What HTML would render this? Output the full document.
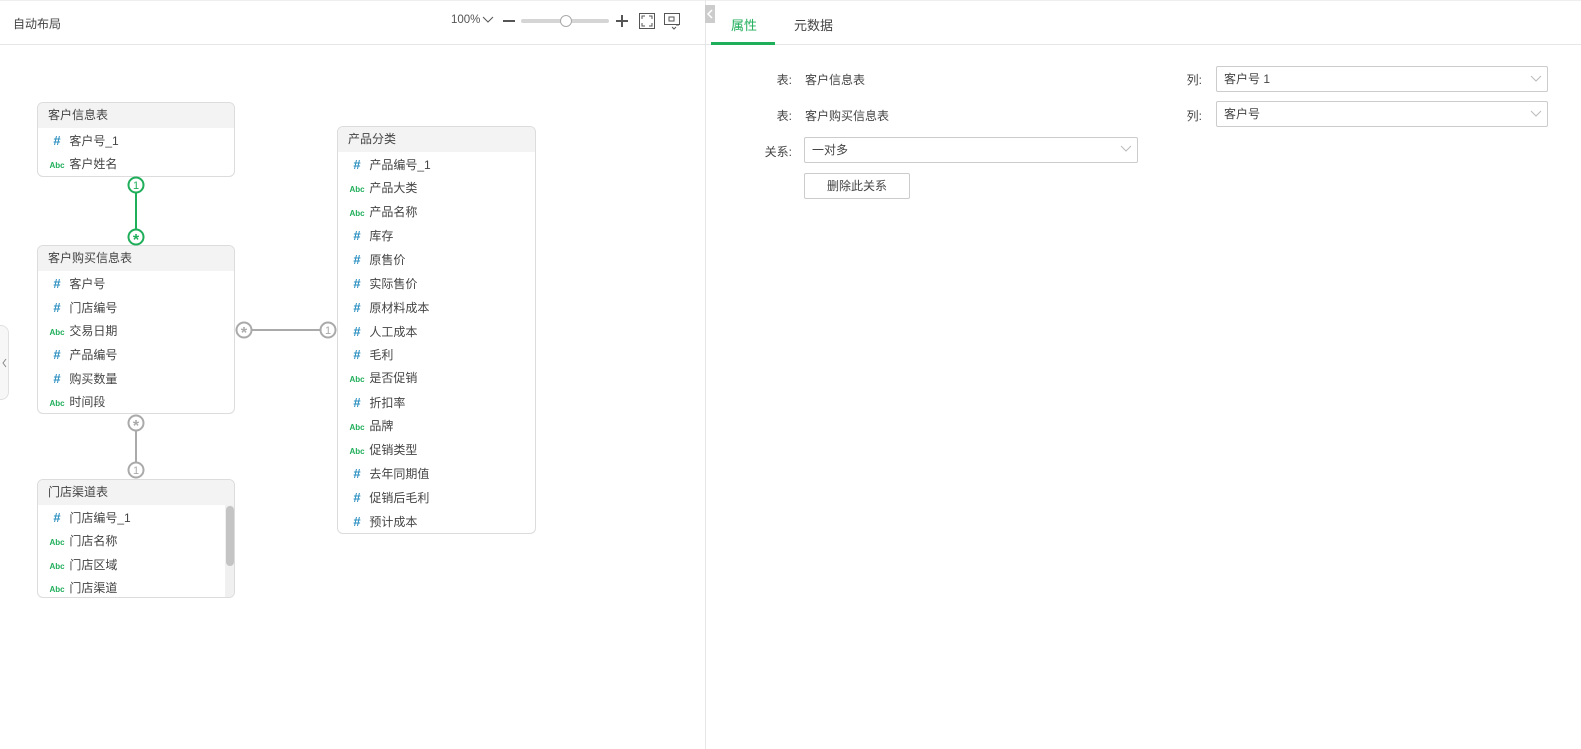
<!DOCTYPE html><html><head><meta charset="utf-8"><style>
*{box-sizing:border-box;margin:0;padding:0}
body{width:1581px;height:749px;overflow:hidden;background:#fff;font-family:"Liberation Sans","Noto Sans CJK SC",sans-serif;font-size:12px;color:#444;position:relative}
.a{position:absolute}
.tbl{position:absolute;border:1px solid #dcdcdc;border-radius:6px;background:#fff;overflow:hidden}
.th{height:25px;background:#f3f3f3;line-height:25px;padding-left:10px;color:#444}
.r{height:23.8px;line-height:23.8px;padding-left:10px;white-space:nowrap}
.h{display:inline-block;width:18px;color:#2b8fc0;font-weight:bold;font-size:13px;text-align:center}
.b{display:inline-block;width:18px;color:#1fae5a;font-size:8px;font-weight:bold;text-align:center}
.lbl{position:absolute;text-align:right;width:60px;color:#444}
.sel{position:absolute;border:1px solid #ccc;border-radius:2px;height:26px;line-height:24px;padding-left:7px}
</style></head><body>
<div class="a" style="left:0;top:44px;width:1581px;height:1px;background:#e6e6e6"></div>
<div class="a" style="left:0;top:0;width:1581px;height:1px;background:#eee"></div>
<div class="a" style="left:705px;top:0;width:1px;height:749px;background:#e6e6e6"></div>
<div class="a" style="left:13px;top:15px">自动布局</div>
<div class="a" style="left:451px;top:14px;color:#555;font-size:11.5px">100%</div>
<svg class="a" style="left:482px;top:15px" width="12" height="10"><path d="M1 2 L6 7 L11 2" stroke="#555" fill="none"/></svg>
<div class="a" style="left:503px;top:20px;width:12px;height:2px;background:#555"></div>
<div class="a" style="left:521px;top:19px;width:88px;height:4px;border-radius:2px;background:#d5d5d5"></div>
<div class="a" style="left:560px;top:15px;width:12px;height:12px;border-radius:50%;background:#fff;border:1px solid #aaa"></div>
<div class="a" style="left:616px;top:20px;width:12px;height:2px;background:#555"></div>
<div class="a" style="left:621px;top:15px;width:2px;height:12px;background:#555"></div>
<svg class="a" style="left:639px;top:13px" width="16" height="16"><rect x=".5" y=".5" width="15" height="15" fill="none" stroke="#555"/><path d="M3 6V3H6M10 3H13V6M13 10V13H10M6 13H3V10" stroke="#555" fill="none"/></svg>
<svg class="a" style="left:664px;top:13px" width="18" height="17"><rect x=".5" y=".5" width="15" height="11" fill="none" stroke="#555"/><path d="M5 4H10V8H5Z" stroke="#555" fill="none"/><path d="M8 14l2 2 2-2M12 12h3" stroke="#555" fill="none"/></svg>
<div class="a" style="left:705px;top:5px;width:10px;height:18px;background:#ccc"></div>
<svg class="a" style="left:706px;top:9px" width="8" height="10"><path d="M6 1 L2 5 L6 9" stroke="#fff" fill="none" stroke-width="1.5"/></svg>
<div class="a" style="left:731px;top:15px;color:#1fae5a;font-size:13px">属性</div>
<div class="a" style="left:711px;top:42px;width:64px;height:3px;background:#1fae5a"></div>
<div class="a" style="left:794px;top:15px;font-size:13px">元数据</div>
<div class="a" style="left:0;top:325px;width:9px;height:75px;border:1px solid #e0e0e0;border-left:0;border-radius:0 8px 8px 0;background:#f7f7f7"></div>
<svg class="a" style="left:1px;top:358px" width="7" height="10"><path d="M5 1 L2 5 L5 9" stroke="#888" fill="none"/></svg>

<div class="tbl" style="left:37px;top:102px;width:198px;height:75px"><div class="th">客户信息表</div>
<div class="r" style="margin-top:1px"><span class="h">#</span> 客户号_1</div><div class="r"><span class="b">Abc</span> 客户姓名</div></div>

<div class="tbl" style="left:37px;top:245px;width:198px;height:169px"><div class="th">客户购买信息表</div>
<div style="padding-top:1px"><div class="r"><span class="h">#</span> 客户号</div><div class="r"><span class="h">#</span> 门店编号</div><div class="r"><span class="b">Abc</span> 交易日期</div><div class="r"><span class="h">#</span> 产品编号</div><div class="r"><span class="h">#</span> 购买数量</div><div class="r"><span class="b">Abc</span> 时间段</div></div></div>

<div class="tbl" style="left:37px;top:479px;width:198px;height:119px"><div class="th">门店渠道表</div>
<div style="padding-top:1px"><div class="r"><span class="h">#</span> 门店编号_1</div><div class="r"><span class="b">Abc</span> 门店名称</div><div class="r"><span class="b">Abc</span> 门店区域</div><div class="r"><span class="b">Abc</span> 门店渠道</div></div>
<div class="a" style="left:187px;top:25px;width:10px;height:94px;background:#f0f0f0"></div>
<div class="a" style="left:188px;top:26px;width:8px;height:60px;border-radius:4px;background:#c4c4c4"></div></div>

<div class="tbl" style="left:337px;top:126px;width:199px;height:408px"><div class="th">产品分类</div>
<div style="padding-top:1px">
<div class="r"><span class="h">#</span> 产品编号_1</div><div class="r"><span class="b">Abc</span> 产品大类</div><div class="r"><span class="b">Abc</span> 产品名称</div><div class="r"><span class="h">#</span> 库存</div><div class="r"><span class="h">#</span> 原售价</div><div class="r"><span class="h">#</span> 实际售价</div><div class="r"><span class="h">#</span> 原材料成本</div><div class="r"><span class="h">#</span> 人工成本</div><div class="r"><span class="h">#</span> 毛利</div><div class="r"><span class="b">Abc</span> 是否促销</div><div class="r"><span class="h">#</span> 折扣率</div><div class="r"><span class="b">Abc</span> 品牌</div><div class="r"><span class="b">Abc</span> 促销类型</div><div class="r"><span class="h">#</span> 去年同期值</div><div class="r"><span class="h">#</span> 促销后毛利</div><div class="r"><span class="h">#</span> 预计成本</div></div></div>

<svg class="a" style="left:0;top:0" width="705" height="749">
<g font-family="Liberation Sans" font-size="11" text-anchor="middle">
<line x1="136" y1="193" x2="136" y2="229" stroke="#1fae5a" stroke-width="2"/>
<circle cx="136" cy="185" r="7.5" fill="#fff" stroke="#1fae5a" stroke-width="2"/><text x="136" y="189" fill="#1fae5a">1</text>
<circle cx="136" cy="237" r="7.5" fill="#fff" stroke="#1fae5a" stroke-width="2"/><text x="136" y="245" fill="#1fae5a" font-size="16" font-weight="bold">*</text>
<line x1="252" y1="330" x2="320" y2="330" stroke="#aaa" stroke-width="2"/>
<circle cx="244" cy="330" r="7.5" fill="#fff" stroke="#aaa" stroke-width="2"/><text x="244" y="338" fill="#aaa" font-size="16" font-weight="bold">*</text>
<circle cx="328" cy="330" r="7.5" fill="#fff" stroke="#aaa" stroke-width="2"/><text x="328" y="334" fill="#aaa">1</text>
<line x1="136" y1="431" x2="136" y2="462" stroke="#aaa" stroke-width="2"/>
<circle cx="136" cy="423" r="7.5" fill="#fff" stroke="#aaa" stroke-width="2"/><text x="136" y="431" fill="#aaa" font-size="16" font-weight="bold">*</text>
<circle cx="136" cy="470" r="7.5" fill="#fff" stroke="#aaa" stroke-width="2"/><text x="136" y="474" fill="#aaa">1</text>
</g></svg>

<div class="lbl" style="left:732px;top:71px">表:</div>
<div class="a" style="left:805px;top:71px">客户信息表</div>
<div class="lbl" style="left:732px;top:107px">表:</div>
<div class="a" style="left:805px;top:107px">客户购买信息表</div>
<div class="lbl" style="left:732px;top:143px">关系:</div>
<div class="sel" style="left:804px;top:137px;width:334px">一对多</div>
<div class="a" style="left:804px;top:173px;width:106px;height:26px;border:1px solid #ccc;border-radius:2px;text-align:center;line-height:24px">删除此关系</div>
<div class="lbl" style="left:1142px;top:71px">列:</div>
<div class="sel" style="left:1216px;top:66px;width:332px">客户号 1</div>
<div class="lbl" style="left:1142px;top:107px">列:</div>
<div class="sel" style="left:1216px;top:101px;width:332px">客户号</div>
<svg class="a" style="left:1120px;top:145px" width="12" height="8"><path d="M1 1L6 6L11 1" stroke="#bbb" fill="none"/></svg>
<svg class="a" style="left:1530px;top:75px" width="12" height="8"><path d="M1 1L6 6L11 1" stroke="#bbb" fill="none"/></svg>
<svg class="a" style="left:1530px;top:110px" width="12" height="8"><path d="M1 1L6 6L11 1" stroke="#bbb" fill="none"/></svg>
</body></html>
